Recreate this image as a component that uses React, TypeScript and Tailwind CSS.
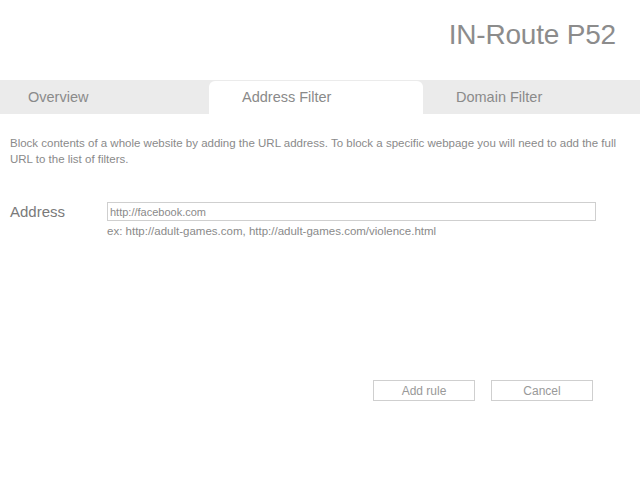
export default function App() {
  return (
    <div
      className="w-[640px] h-[480px] bg-white text-[#888] overflow-hidden"
      style={{ fontFamily: '"Liberation Sans", Arial, sans-serif' }}
    >
      {/* Header */}
      <div className="h-[80px] flex justify-end pr-[24px] pt-[18px]">
        <h1 className="text-[28px] leading-[34px] text-[#8c8c8c] tracking-[-0.2px]">IN-Route P52</h1>
      </div>

      {/* Tabs */}
      <div className="h-[34px] bg-[#ebebeb] flex pt-px">
        <div className="w-[209px] flex items-center pl-[28px] text-[14.5px] text-[#8a8a8a]">Overview</div>
        <div className="w-[214px] flex items-center pl-[33px] text-[14.5px] text-[#8a8a8a] bg-white rounded-t-[6px]">
          Address Filter
        </div>
        <div className="flex-1 flex items-center pl-[33px] text-[14.5px] text-[#8a8a8a]">Domain Filter</div>
      </div>

      {/* Description */}
      <p className="pl-[10px] pt-[21px] pr-[18px] text-[11.5px] leading-[16px] text-[#8a8a8a]">
        Block contents of a whole website by adding the URL address. To block a specific webpage you will need to add the full URL to the list of filters.
      </p>

      {/* Address row */}
      <div className="flex mt-[35px]">
        <label className="w-[107px] shrink-0 pl-[10px] pt-[1px] text-[15px] leading-[18px] text-[#7a7a7a]">Address</label>
        <div className="w-[489px]">
          <input
            type="text"
            placeholder="http://facebook.com"
            className="block w-[489px] h-[19px] border border-[#cfcfcf] px-[2px] text-[11px] text-[#888] placeholder:text-[#8a8a8a] outline-none"
            style={{ fontFamily: '"Liberation Sans", Arial, sans-serif' }}
          />
          <div className="mt-[3px] text-[11.5px] leading-[14px] text-[#8a8a8a]">
            ex: http://adult-games.com, http://adult-games.com/violence.html
          </div>
        </div>
      </div>

      {/* Buttons */}
      <div className="flex justify-end gap-[16px] pr-[47px] mt-[142px]">
        <button className="w-[102px] h-[21px] border border-[#cfcfcf] bg-white text-[12px] text-[#999]">Add rule</button>
        <button className="w-[102px] h-[21px] border border-[#cfcfcf] bg-white text-[12px] text-[#999]">Cancel</button>
      </div>
    </div>
  );
}
